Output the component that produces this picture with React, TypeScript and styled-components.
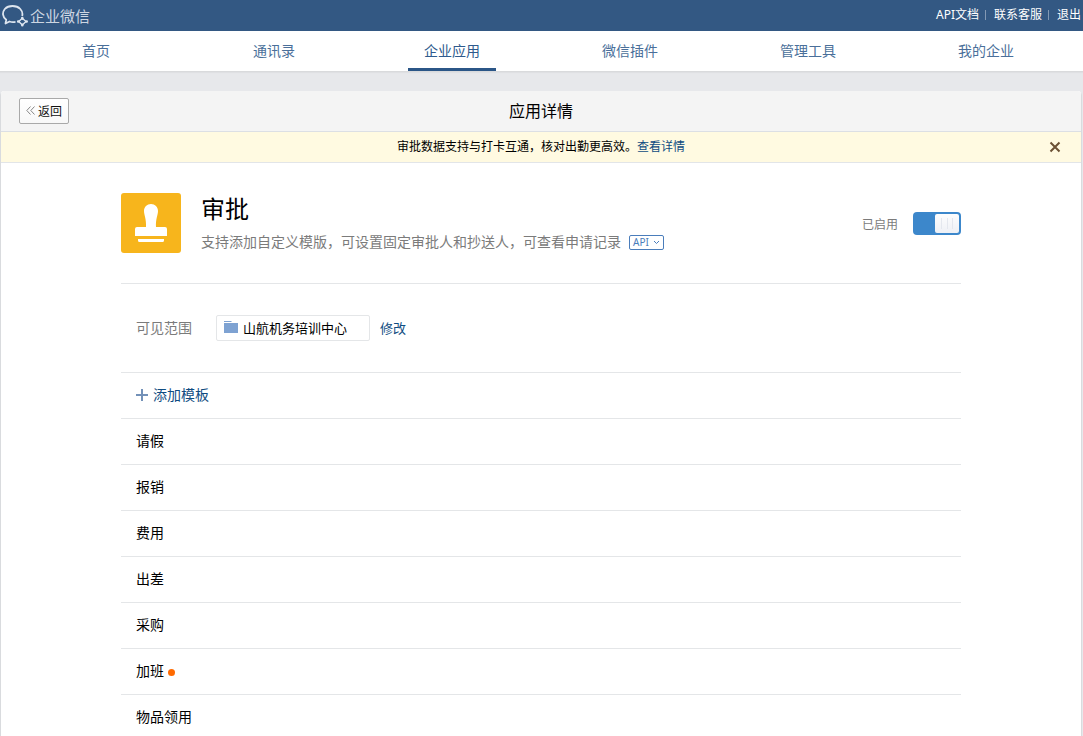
import React, { useState } from 'react';
import styled, { createGlobalStyle } from 'styled-components';

const GlobalStyle = createGlobalStyle`
  *, *::before, *::after { box-sizing: border-box; }
  html { scrollbar-width: none; }
  body {
    margin: 0;
    background: #e7e8eb;
    color: #000;
    font-family: "Noto Sans", "Noto Sans CJK SC", sans-serif;
    font-size: 14px;
    line-height: 20px;
  }
  a { color: #0f4c81; text-decoration: none; }
  button { font-family: inherit; cursor: pointer; }
  h1, h2, p, ul { margin: 0; padding: 0; font-weight: 400; }
  ul { list-style: none; }
`;

const TopBar = styled.header`
  display: flex;
  align-items: center;
  justify-content: space-between;
  height: 31px;
  padding: 0 2px;
  background: #335883;
`;

const Brand = styled.a`
  display: flex;
  align-items: center;
  gap: 1px;
  color: #cdd6e2;
  font-size: 15px;
`;

const TopLinks = styled.nav`
  display: flex;
  align-items: center;
  height: 31px;
  padding-bottom: 2px;
`;

const TopLink = styled.a`
  color: #fff;
  font-size: 12px;

  & + & {
    display: flex;
    align-items: center;
  }

  & + &::before {
    content: "";
    width: 1px;
    height: 10px;
    margin: 0 8px 0 6px;
    background: #8399b4;
  }
`;

const MainNav = styled.nav`
  display: flex;
  height: 41px;
  padding: 0 8px 0 7px;
  background: #fff;
  border-bottom: 1px solid #d9dadc;
  box-shadow: 0 1px 1px #dfe0e3;
`;

const NavItem = styled.a<{ $active?: boolean }>`
  flex: 1;
  display: flex;
  justify-content: center;
  color: ${(p) => (p.$active ? '#2e5a8d' : '#4a6f9a')};
  line-height: 40px;

  span {
    width: 88px;
    height: 40px;
    text-align: center;
    border-bottom: ${(p) => (p.$active ? '3px solid #2b5687' : '0')};
  }
`;

const Card = styled.main`
  margin: 19px 2px 0 1px;
  background: #fff;
  border-radius: 3px 3px 0 0;
  box-shadow: 0 2px 0 1px #d9dbde;
`;

const CardHeader = styled.div`
  display: grid;
  grid-template-columns: 1fr auto 1fr;
  align-items: center;
  height: 41px;
  padding: 0 18px;
  background: #f4f4f4;
  border-bottom: 1px solid #dcdfe4;
  border-radius: 3px 3px 0 0;
`;

const BackButton = styled.button`
  justify-self: start;
  display: flex;
  align-items: center;
  gap: 3px;
  height: 26px;
  padding: 0 6px 1px;
  color: #111;
  font-size: 12px;
  background: linear-gradient(#fff, #f8f8f8);
  border: 1px solid #a9a9a9;
  border-radius: 2px;
`;

const CardTitle = styled.h1`
  font-size: 16px;
  line-height: 24px;
`;

const Notice = styled.div`
  display: grid;
  grid-template-columns: 1fr auto 1fr;
  align-items: center;
  height: 31px;
  padding: 0 18px;
  background: #fffae1;
  border-bottom: 1px solid #e2e5e8;
  font-size: 12px;

  p { grid-column: 2; }
`;

const CloseButton = styled.button`
  justify-self: end;
  display: flex;
  padding: 2px;
  background: none;
  border: 0;
`;

const Content = styled.div`
  max-width: 840px;
  margin: 0 auto;
`;

const AppInfo = styled.section`
  display: flex;
  align-items: center;
  gap: 20px;
  padding: 30px 0;
  border-bottom: 1px solid #e4e6e8;
`;

const AppText = styled.div`
  flex: 1;
`;

const AppName = styled.h2`
  font-size: 24px;
  line-height: 32px;
`;

const Description = styled.div`
  display: flex;
  align-items: center;
  gap: 8px;
  height: 28px;
  padding-top: 6px;
  color: #7b7b7b;
`;

const ApiButton = styled.button`
  display: flex;
  align-items: center;
  gap: 4px;
  height: 15px;
  padding: 0 3px;
  color: #4a7dbb;
  font-size: 10px;
  line-height: 12px;
  background: #fff;
  border: 1px solid #4a7dbb;
  border-radius: 2px;
`;

const SwitchLabel = styled.label`
  display: flex;
  align-items: center;
  gap: 15px;
  color: #7b7b7b;
  font-size: 12px;
  cursor: pointer;

  span { padding-top: 3px; }
`;

const Switch = styled.input`
  appearance: none;
  display: flex;
  justify-content: flex-start;
  width: 48px;
  height: 23px;
  margin: 0;
  padding: 2px;
  background: #b9bec5;
  border-radius: 4px;
  cursor: pointer;

  &::before {
    content: "";
    width: 24px;
    height: 19px;
    background:
      linear-gradient(#e4e7ee, #e4e7ee) 6px 4px / 1px 11px no-repeat,
      linear-gradient(#e4e7ee, #e4e7ee) 12px 4px / 1px 11px no-repeat,
      linear-gradient(#e4e7ee, #e4e7ee) 17px 4px / 1px 11px no-repeat,
      linear-gradient(#fdfdfe, #eef0f5);
    border-radius: 2px;
  }

  &:checked {
    justify-content: flex-end;
    background: #3c87cb;
  }
`;

const ScopeRow = styled.section`
  display: flex;
  align-items: center;
  height: 89px;
  padding: 0 15px;
  border-bottom: 1px solid #e4e6e8;
`;

const ScopeLabel = styled.span`
  width: 80px;
  color: #7b7b7b;
`;

const ScopeChip = styled.div`
  display: flex;
  align-items: center;
  gap: 5px;
  width: 154px;
  height: 26px;
  margin-right: 10px;
  padding: 0 7px;
  font-size: 13px;
  border: 1px solid #e4e6e8;
  border-radius: 2px;

  svg { margin-bottom: 2px; }
`;

const EditLink = styled.a`
  font-size: 13px;
`;

const Row = styled.li`
  display: flex;
  align-items: center;
  gap: 4px;
  height: 46px;
  padding: 0 15px 2px;
  border-bottom: 1px solid #e4e6e8;
`;

const AddLink = styled.a`
  display: flex;
  align-items: center;
  gap: 5px;
`;

const Dot = styled.span`
  width: 7px;
  height: 7px;
  margin-top: 3px;
  background: #ff6a00;
  border-radius: 50%;
`;

const LogoIcon = () => (
  <svg width="27" height="24" viewBox="0 0 27 24" fill="none" stroke="#dde5ef">
    <path
      d="M20.200 12C20.800 9.500 20.200 7 18.300 5C14.500 1 6.500 1 2.800 5C0 8.500 .5 13 4.200 15.800L3.500 19.500L7.500 17.500C9.500 18.200 11.500 18.200 13.500 17.800"
      strokeWidth="1.800"
      strokeLinejoin="round"
    />
    <path d="M20.300 14.200L24 17.500L20.300 21L16.800 17.500Z" strokeWidth="1.300" />
    <path d="M20.300 14v.6M24.300 17.500h.4M20.300 20.700v.6M16.200 17.500h.4" strokeWidth="2.600" strokeLinecap="round" />
  </svg>
);

const BackIcon = () => (
  <svg width="9" height="9" viewBox="0 0 9 9" fill="none" stroke="#888">
    <path d="M4.500 .5L.8 4.500L4.500 8.500M8.500 .5L4.800 4.500L8.500 8.500" />
  </svg>
);

const CloseIcon = () => (
  <svg width="12" height="12" viewBox="0 0 12 12" stroke="#6b5034" strokeWidth="2">
    <path d="M1.500 1.500L10.500 10.500M10.500 1.500L1.500 10.500" />
  </svg>
);

const StampIcon = () => (
  <svg width="60" height="60" viewBox="0 0 60 60">
    <rect width="60" height="60" rx="3" fill="#f7b51c" />
    <path
      fill="#fff"
      d="M30 11C26 11 23 14 23 18C23 22 25.500 26 25 34H16Q14 34 14 36V43H46V36Q46 34 44 34H35C34.500 26 37 22 37 18C37 14 34 11 30 11ZM17 46H43V47.500Q43 49 41.500 49H18.500Q17 49 17 47.500Z"
    />
  </svg>
);

const ChevronIcon = () => (
  <svg width="7" height="5" viewBox="0 0 7 5" fill="none" stroke="#4a7dbb">
    <path d="M1 1L3.500 3.500L6 1" />
  </svg>
);

const FolderIcon = () => (
  <svg width="14" height="12" viewBox="0 0 14 12" fill="#7ea2d2">
    <path d="M0 0H7L8 1H0ZM0 2H14V12H0Z" />
  </svg>
);

const PlusIcon = () => (
  <svg width="12" height="12" viewBox="0 0 12 12" stroke="#7391b8" strokeWidth="2">
    <path d="M6 0V12M0 6H12" />
  </svg>
);

const navItems = ['首页', '通讯录', '企业应用', '微信插件', '管理工具', '我的企业'];

const templates = [
  { name: '请假' },
  { name: '报销' },
  { name: '费用' },
  { name: '出差' },
  { name: '采购' },
  { name: '加班', fresh: true },
  { name: '物品领用' },
];

export default function App() {
  const [enabled, setEnabled] = useState(true);
  const [noticeOpen, setNoticeOpen] = useState(true);

  return (
    <>
      <GlobalStyle />
      <TopBar>
        <Brand href="#">
          <LogoIcon />
          企业微信
        </Brand>
        <TopLinks>
          <TopLink href="#">API文档</TopLink>
          <TopLink href="#">联系客服</TopLink>
          <TopLink href="#">退出</TopLink>
        </TopLinks>
      </TopBar>
      <MainNav>
        {navItems.map((item) => (
          <NavItem key={item} href="#" $active={item === '企业应用'}>
            <span>{item}</span>
          </NavItem>
        ))}
      </MainNav>
      <Card>
        <CardHeader>
          <BackButton type="button">
            <BackIcon />
            返回
          </BackButton>
          <CardTitle>应用详情</CardTitle>
        </CardHeader>
        {noticeOpen && (
          <Notice>
            <p>
              审批数据支持与打卡互通，核对出勤更高效。<a href="#">查看详情</a>
            </p>
            <CloseButton type="button" aria-label="关闭" onClick={() => setNoticeOpen(false)}>
              <CloseIcon />
            </CloseButton>
          </Notice>
        )}
        <Content>
          <AppInfo>
            <StampIcon />
            <AppText>
              <AppName>审批</AppName>
              <Description>
                支持添加自定义模版，可设置固定审批人和抄送人，可查看申请记录
                <ApiButton type="button">
                  API
                  <ChevronIcon />
                </ApiButton>
              </Description>
            </AppText>
            <SwitchLabel>
              <span>已启用</span>
              <Switch
                type="checkbox"
                role="switch"
                checked={enabled}
                onChange={(e) => setEnabled(e.target.checked)}
              />
            </SwitchLabel>
          </AppInfo>
          <ScopeRow>
            <ScopeLabel>可见范围</ScopeLabel>
            <ScopeChip>
              <FolderIcon />
              山航机务培训中心
            </ScopeChip>
            <EditLink href="#">修改</EditLink>
          </ScopeRow>
          <ul>
            <Row>
              <AddLink href="#">
                <PlusIcon />
                添加模板
              </AddLink>
            </Row>
            {templates.map((t) => (
              <Row key={t.name}>
                {t.name}
                {t.fresh && <Dot />}
              </Row>
            ))}
          </ul>
        </Content>
      </Card>
    </>
  );
}
